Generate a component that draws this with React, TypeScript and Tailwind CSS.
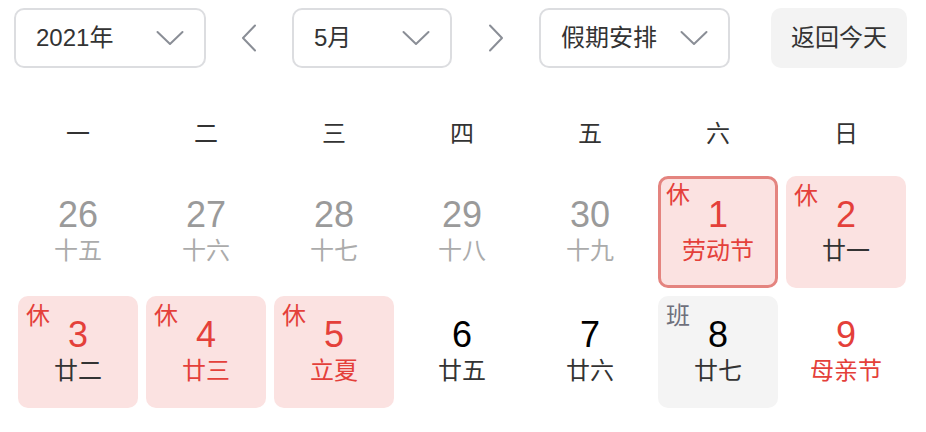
const FONT = { fontFamily: '"Liberation Sans", "Noto Sans CJK SC", sans-serif' };

type Day = {
  n: number;
  lunar: string;
  kind?: "rest" | "work";
  muted?: boolean;
  redNum?: boolean;
  redLunar?: boolean;
  today?: boolean;
};

const days: Day[] = [
  { n: 26, lunar: "十五", muted: true },
  { n: 27, lunar: "十六", muted: true },
  { n: 28, lunar: "十七", muted: true },
  { n: 29, lunar: "十八", muted: true },
  { n: 30, lunar: "十九", muted: true },
  { n: 1, lunar: "劳动节", kind: "rest", redNum: true, redLunar: true, today: true },
  { n: 2, lunar: "廿一", kind: "rest", redNum: true },
  { n: 3, lunar: "廿二", kind: "rest", redNum: true },
  { n: 4, lunar: "廿三", kind: "rest", redNum: true, redLunar: true },
  { n: 5, lunar: "立夏", kind: "rest", redNum: true, redLunar: true },
  { n: 6, lunar: "廿五" },
  { n: 7, lunar: "廿六" },
  { n: 8, lunar: "廿七", kind: "work" },
  { n: 9, lunar: "母亲节", redNum: true, redLunar: true },
];

function ChevronDown() {
  return (
    <svg width="28" height="16" viewBox="0 0 28 16" fill="none">
      <path d="M1.5 2 L14 14 L26.5 2" stroke="#8a8e96" strokeWidth="2" strokeLinecap="round" strokeLinejoin="round" />
    </svg>
  );
}

function Arrow({ dir }: { dir: "left" | "right" }) {
  return (
    <svg width="16" height="28" viewBox="0 0 16 28" fill="none">
      <path
        d={dir === "left" ? "M14 1.5 L2 14 L14 26.5" : "M2 1.5 L14 14 L2 26.5"}
        stroke="#8a8e96"
        strokeWidth="2"
        strokeLinecap="round"
        strokeLinejoin="round"
      />
    </svg>
  );
}

function Select({ label, width }: { label: string; width: string }) {
  return (
    <div
      className={`flex h-[60px] ${width} items-center justify-between rounded-[10px] border-2 border-[#dcdde0] pl-[20px] pr-[20px] text-[24px] text-[#333]`}
    >
      <span>{label}</span>
      <ChevronDown />
    </div>
  );
}

function Cell({ d }: { d: Day }) {
  let bg = "";
  if (d.kind === "rest") bg = "bg-[#fbe2e1]";
  if (d.kind === "work") bg = "bg-[#f4f4f4]";
  const border = d.today ? "border-[3px] border-[#e4847f]" : "";
  const numColor = d.muted ? "text-[#9a9a9a]" : d.redNum ? "text-[#e4403a]" : "text-black";
  const lunarColor = d.muted ? "text-[#ababab]" : d.redLunar ? "text-[#e4403a]" : "text-[#333]";
  return (
    <div className={`relative flex h-[112px] flex-col items-center justify-center rounded-[10px] ${bg} ${border}`}>
      {d.kind && (
        <span
          className={`absolute ${d.today ? "left-[5px] top-[4px]" : "left-[8px] top-[8px]"} text-[24px] leading-none ${
            d.kind === "rest" ? "text-[#e4403a]" : "text-[#6f707c]"
          }`}
        >
          {d.kind === "rest" ? "休" : "班"}
        </span>
      )}
      <span className={`-mt-[4px] text-[36px] leading-[40px] ${numColor}`}>{d.n}</span>
      <span className={`mt-[1px] text-[24px] leading-[30px] ${lunarColor}`}>{d.lunar}</span>
    </div>
  );
}

export default function App() {
  return (
    <div className="h-[432px] w-[926px] bg-white" style={FONT}>
      <div className="flex items-center pl-[14px] pt-[8px]">
        <Select label="2021年" width="w-[192px]" />
        <div className="flex w-[86px] justify-center">
          <Arrow dir="left" />
        </div>
        <Select label="5月" width="w-[160px]" />
        <div className="flex w-[87px] justify-center">
          <Arrow dir="right" />
        </div>
        <Select label="假期安排" width="w-[191px]" />
        <div className="ml-[41px] flex h-[60px] w-[136px] items-center justify-center rounded-[10px] bg-[#f3f3f3] text-[24px] text-[#333]">
          返回今天
        </div>
      </div>

      <div className="mt-[44px] grid grid-cols-7 gap-x-[8px] pl-[18px] pr-[20px]">
        {["一", "二", "三", "四", "五", "六", "日"].map((w) => (
          <div key={w} className="flex h-[44px] items-center justify-center text-[24px] text-[#333]">
            {w}
          </div>
        ))}
      </div>

      <div className="mt-[20px] grid grid-cols-7 gap-[8px] pl-[18px] pr-[20px]">
        {days.map((d) => (
          <Cell key={`${d.n}-${d.lunar}`} d={d} />
        ))}
      </div>
    </div>
  );
}
